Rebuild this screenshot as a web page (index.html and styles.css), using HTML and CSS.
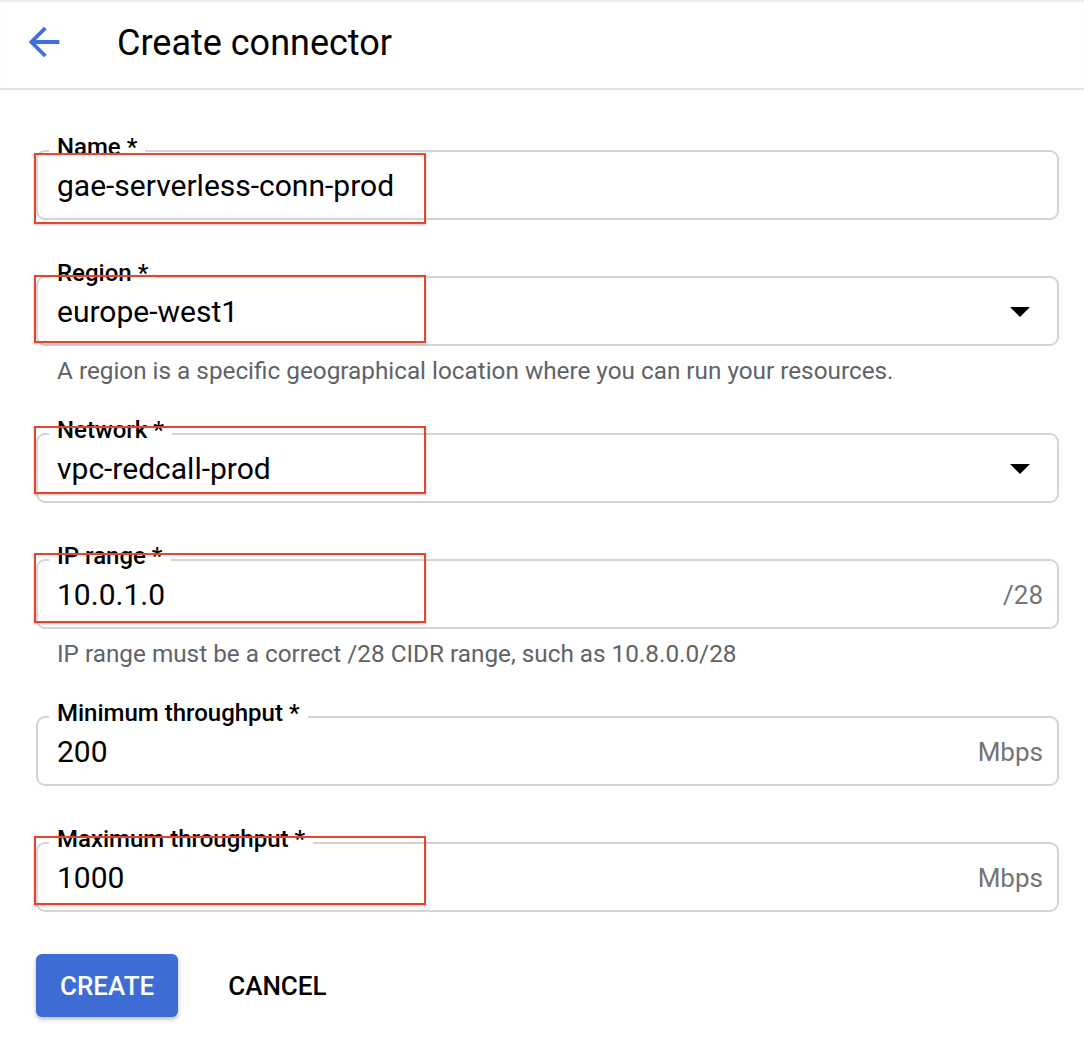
FILE: index.html
```html
<!DOCTYPE html>
<html lang="en">
<head>
<meta charset="utf-8">
<title>Create connector</title>
<link rel="stylesheet" href="styles.css">
</head>
<body>
<header class="topbar">
  <button class="back" aria-label="Back">
    <svg viewBox="0 0 24 24" width="46" height="46"><path d="M20 11H7.83l5.59-5.59L12 4l-8 8 8 8 1.41-1.41L7.83 13H20v-2z" fill="#3f6fd8"/></svg>
  </button>
  <h1 class="title">Create connector</h1>
</header>

<main class="form">
  <div class="group">
    <div class="field">
      <span class="lbl">Name *</span>
      <span class="val">gae-serverless-conn-prod</span>
      <span class="mark mark-name"></span>
    </div>
  </div>

  <div class="group">
    <div class="field">
      <span class="lbl">Region *</span>
      <span class="val">europe-west1</span>
      <svg class="caret" viewBox="0 0 20 10" width="20" height="10"><polygon points="0,0 20,0 10,10" fill="#000"/></svg>
      <span class="mark mark-region"></span>
    </div>
    <p class="help">A region is a specific geographical location where you can run your resources.</p>
  </div>

  <div class="group">
    <div class="field">
      <span class="lbl">Network *</span>
      <span class="val">vpc-redcall-prod</span>
      <svg class="caret" viewBox="0 0 20 10" width="20" height="10"><polygon points="0,0 20,0 10,10" fill="#000"/></svg>
      <span class="mark mark-network"></span>
    </div>
  </div>

  <div class="group">
    <div class="field">
      <span class="lbl">IP range *</span>
      <span class="val">10.0.1.0</span>
      <span class="suffix">/28</span>
      <span class="mark mark-ip"></span>
    </div>
    <p class="help">IP range must be a correct /28 CIDR range, such as 10.8.0.0/28</p>
  </div>

  <div class="group">
    <div class="field">
      <span class="lbl">Minimum throughput *</span>
      <span class="val">200</span>
      <span class="suffix">Mbps</span>
    </div>
  </div>

  <div class="group">
    <div class="field">
      <span class="lbl">Maximum throughput *</span>
      <span class="val">1000</span>
      <span class="suffix">Mbps</span>
      <span class="mark mark-max"></span>
    </div>
  </div>

  <div class="actions">
    <button class="btn btn-primary">Create</button>
    <button class="btn btn-text">Cancel</button>
  </div>
</main>
</body>
</html>
```

FILE: styles.css
```css
* { box-sizing: border-box; }

html, body {
  margin: 0;
  padding: 0;
  background: #fff;
}

body {
  font-family: Roboto, "Liberation Sans", Arial, sans-serif;
  color: #000;
  width: 1084px;
}

.topbar {
  height: 90px;
  display: flex;
  align-items: center;
  border-bottom: 2px solid #e2e2e2;
  box-shadow: inset 0 3px 3px -2px rgba(0, 0, 0, 0.12);
  padding-left: 21px;
}

.back {
  border: 0;
  background: none;
  padding: 0;
  margin: -4px 0 0 0;
  width: 46px;
  height: 46px;
  display: flex;
  cursor: pointer;
}

.title {
  margin: -2px 0 0 50px;
  font-size: 36px;
  font-weight: 400;
  letter-spacing: 0;
}

.form {
  padding: 60px 25px 40px 36px;
  display: flex;
  flex-direction: column;
  gap: 56px;
}

.group {
  display: flex;
  flex-direction: column;
}

.field {
  position: relative;
  height: 70px;
  border: 2px solid #d4d4d4;
  border-radius: 9px;
  display: flex;
  align-items: center;
  padding: 1px 14px 0 19px;
}

.lbl {
  position: absolute;
  left: 11px;
  top: -18px;
  padding: 0 8px;
  background: #fff;
  font-size: 24px;
  line-height: 26px;
  font-weight: 500;
  color: #000;
}

.val {
  flex: 1;
  font-size: 30px;
  line-height: 36px;
  color: #000;
}

.suffix {
  font-size: 26px;
  color: #757575;
}

.caret {
  margin-right: 13px;
}

.help {
  margin: 11px 0 -8px 21px;
  font-size: 24.3px;
  line-height: 28px;
  color: #5f6368;
}

.mark {
  position: absolute;
  left: -4px;
  width: 392px;
  border: 2px solid #e5452d;
  box-shadow: 0 1px 2px rgba(0, 0, 0, 0.25);
  pointer-events: none;
}

.mark-name { top: 1px; height: 71px; }
.mark-region { top: -3px; height: 68px; }
.mark-network { top: -9px; height: 68px; }
.mark-ip { top: -8px; height: 70px; }
.mark-max { top: -8px; height: 69px; }

.actions {
  display: flex;
  align-items: center;
  gap: 26px;
  margin-top: -14px;
}

.btn {
  font-family: Roboto, "Liberation Sans", Arial, sans-serif;
  font-size: 26px;
  font-weight: 500;
  text-transform: uppercase;
  border: 0;
  cursor: pointer;
  height: 63px;
  padding: 0 24px;
  border-radius: 6px;
  letter-spacing: 0;
}

.btn-primary {
  background: #3d6cd4;
  color: #fff;
  box-shadow: 0 2px 4px rgba(0, 0, 0, 0.3);
}

.btn-text {
  background: transparent;
  color: #000;
}
```
